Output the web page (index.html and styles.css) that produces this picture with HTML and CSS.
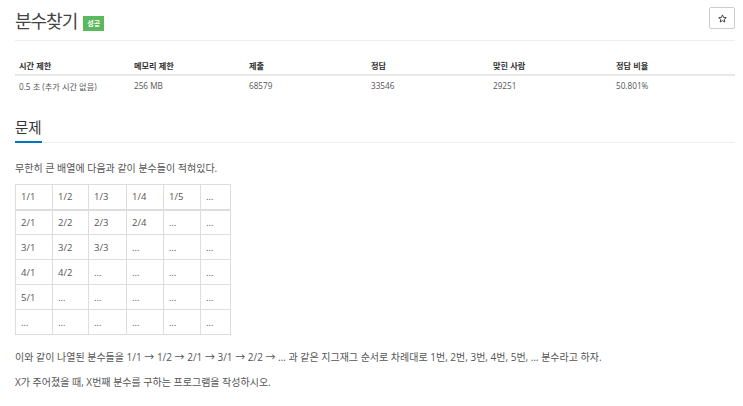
FILE: index.html
```html
<!DOCTYPE html>
<html lang="ko">
<head>
<meta charset="utf-8">
<link rel="stylesheet" href="styles.css">
</head>
<body>
<div class="page">
  <div class="title-bar">
    <h1 class="title">분수찾기</h1>
    <span class="badge">성공</span>
    <button class="star-btn" type="button" aria-label="star">
      <svg width="9" height="9" viewBox="0 0 24 24"><path d="M12 2.5l2.9 6.6 7.1.6-5.4 4.7 1.6 7-6.2-3.7-6.2 3.7 1.6-7L2 9.7l7.1-.6z" fill="none" stroke="#333" stroke-width="2.4" stroke-linejoin="round"/></svg>
    </button>
  </div>

  <table class="stats">
    <thead>
      <tr><th>시간 제한</th><th>메모리 제한</th><th>제출</th><th>정답</th><th>맞힌 사람</th><th>정답 비율</th></tr>
    </thead>
    <tbody>
      <tr><td>0.5 초 (추가 시간 없음)</td><td>256 MB</td><td>68579</td><td>33546</td><td>29251</td><td>50.801%</td></tr>
    </tbody>
  </table>

  <div class="section-head"><h2>문제</h2></div>

  <div class="desc">
    <p>무한히 큰 배열에 다음과 같이 분수들이 적혀있다.</p>
    <table class="grid">
      <thead>
        <tr><td>1/1</td><td>1/2</td><td>1/3</td><td>1/4</td><td>1/5</td><td>…</td></tr>
      </thead>
      <tbody>
        <tr><td>2/1</td><td>2/2</td><td>2/3</td><td>2/4</td><td>…</td><td>…</td></tr>
        <tr><td>3/1</td><td>3/2</td><td>3/3</td><td>…</td><td>…</td><td>…</td></tr>
        <tr><td>4/1</td><td>4/2</td><td>…</td><td>…</td><td>…</td><td>…</td></tr>
        <tr><td>5/1</td><td>…</td><td>…</td><td>…</td><td>…</td><td>…</td></tr>
        <tr><td>…</td><td>…</td><td>…</td><td>…</td><td>…</td><td>…</td></tr>
      </tbody>
    </table>
    <p>이와 같이 나열된 분수들을 1/1 → 1/2 → 2/1 → 3/1 → 2/2 → … 과 같은 지그재그 순서로 차례대로 1번, 2번, 3번, 4번, 5번, … 분수라고 하자.</p>
    <p>X가 주어졌을 때, X번째 분수를 구하는 프로그램을 작성하시오.</p>
  </div>
</div>
</body>
</html>
```

FILE: styles.css
```css
html, body {
  margin: 0;
  padding: 0;
  background: #fff;
}
body {
  font-family: "Open Sans", "Noto Sans CJK KR", sans-serif;
  color: #555;
  font-size: 9px;
}
.page {
  padding: 0 8px 0 15px;
}
.title-bar {
  display: flex;
  align-items: center;
  height: 41px;
  border-bottom: 1px solid #eee;
  box-sizing: border-box;
  padding-top: 2px;
}
.title {
  margin: 0;
  font-size: 18px;
  font-weight: 400;
  color: #444;
  line-height: 1;
  letter-spacing: -1px;
}
.badge {
  margin-left: 6px;
  margin-top: 4px;
  background: #5cb85c;
  color: #fff;
  font-size: 7px;
  font-weight: 700;
  padding: 2px 4px;
  line-height: 11px;
}
.star-btn {
  margin-left: auto;
  margin-top: -6px;
  width: 26px;
  height: 22px;
  border: 1px solid #ccc;
  border-radius: 2px;
  background: #fff;
  padding: 0;
  display: flex;
  align-items: center;
  justify-content: center;
}
.stats {
  width: 100%;
  border-collapse: collapse;
  margin-top: 14px;
}
.stats th, .stats td {
  text-align: left;
  padding: 0 4px;
  font-size: 8.2px;
  height: 20px;
  box-sizing: border-box;
}
.stats th {
  font-weight: 700;
  color: #333;
  border-bottom: 2px solid #e8e8e8;
}
.stats th:nth-child(1), .stats th:nth-child(2) { width: 115px; }
.stats th:nth-child(3), .stats th:nth-child(4) { width: 122px; }
.stats th:nth-child(5) { width: 123px; }
.section-head {
  margin-top: 24px;
  border-bottom: 1px solid #eee;
}
.section-head h2 {
  display: inline-block;
  margin: 0;
  font-size: 14.5px;
  font-weight: 400;
  color: #333;
  padding-bottom: 4px;
  border-bottom: 2px solid #0076c0;
  margin-bottom: -1px;
  line-height: 18px;
}
.desc {
  padding-top: 17px;
  font-size: 10px;
}
.desc p {
  margin: 0 0 9px 0;
  line-height: 16px;
}
.grid {
  border-collapse: collapse;
  margin: -1px 0 14px 0;
}
.grid td {
  border: 1px solid #ddd;
  padding: 0 5px;
  height: 25px;
  box-sizing: border-box;
  font-size: 9.5px;
  text-align: left;
}
.grid thead td {
  border-bottom-width: 2px;
}
.grid td:nth-child(1) { width: 37px; }
.grid td:nth-child(2) { width: 36px; }
.grid td:nth-child(3) { width: 38px; }
.grid td:nth-child(4) { width: 37px; }
.grid td:nth-child(5) { width: 37px; }
.grid td:nth-child(6) { width: 30px; }
```
